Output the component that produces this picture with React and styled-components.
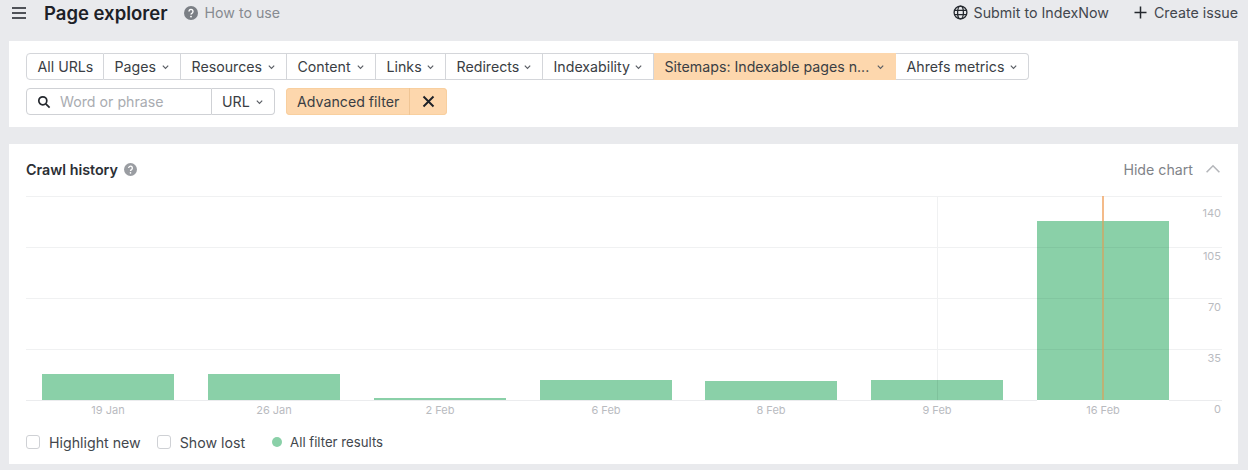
import styled, { createGlobalStyle } from "styled-components";

const GlobalStyle = createGlobalStyle`
    html, body {
        margin: 0;
        background-color: #e9eaed;
        font-family: Inter, "Liberation Sans", sans-serif;
        color: #30343a;
        overflow: hidden;
    }
`

const Page = styled.div`
    width: 1248px;
    height: 470px;
    padding: 0 10px 0 9px;
    box-sizing: border-box;
`

const TopBar = styled.div`
    height: 41px;
    display: flex;
    align-items: center;
    padding-bottom: 16px;
    padding-left: 2px;
    box-sizing: border-box;
`

const Title = styled.h1`
    margin: 0 16px 0 17px;
    font-size: 18.5px;
    line-height: 26px;
    font-weight: 600;
    color: #1d2127;
`

const HowTo = styled.span`
    display: flex;
    align-items: center;
    gap: 7px;
    font-size: 14.2px;
    color: #878b91;
`

const TopActions = styled.div`
    margin-left: auto;
    display: flex;
    align-items: center;
    gap: 24px;
`

const TopAction = styled.span`
    display: flex;
    align-items: center;
    gap: 6px;
    font-size: 14.25px;
    color: #43474d;
`

const Card = styled.section`
    background-color: white;
    box-sizing: border-box;
    height: ${(props) => props.$height}px;
    margin-bottom: 17px;
`

const FilterCard = styled(Card)`
    padding: 12px 17px;
    display: flex;
    flex-direction: column;
    gap: 8px;
`

const Row = styled.div`
    display: flex;
    align-items: stretch;
    height: 27px;
`

const Segment = styled.button`
    display: flex;
    align-items: center;
    justify-content: space-between;
    width: ${(props) => props.$width}px;
    padding: 0 10px 0 10.5px;
    box-sizing: border-box;
    font: inherit;
    font-size: 14.2px;
    white-space: nowrap;
    color: #3a3e44;
    background-color: ${(props) => (props.$active ? "#fdd7ad" : "white")};
    border: 1px solid ${(props) => (props.$active ? "#fdd7ad" : "#d4d6da")};
    border-left-width: ${(props) => (props.$first ? "1px" : "0")};
    border-radius: ${(props) => (props.$first ? "4px 0 0 4px" : props.$last ? "0 4px 4px 0" : "0")};
`

const SearchBox = styled.div`
    width: 186px;
    display: flex;
    align-items: center;
    gap: 9px;
    padding-left: 10px;
    box-sizing: border-box;
    border: 1px solid #cfd1d5;
    border-radius: 4px 0 0 4px;
    font-size: 14.2px;
    color: #a9acb1;
`

const UrlSelect = styled(Segment)`
    padding-left: 10px;
    border-color: #cfd1d5;
    border-left-width: 0;
    border-radius: 0 4px 4px 0;
`

const AdvancedFilter = styled.div`
    margin-left: 11px;
    display: flex;
    background-color: #fdd7ad;
    border-radius: 4px;
    font-size: 14.2px;
    color: #3a3e44;
    box-shadow: inset 0 0 0 1px #f8cf9f;

    span {
        display: flex;
        align-items: center;
        width: 124px;
        padding-left: 11px;
        box-sizing: border-box;
        border-right: 1px solid #f0c594;
    }

    button {
        width: 37px;
        display: flex;
        align-items: center;
        justify-content: center;
        padding: 0;
        border: none;
        background: none;
    }
`

const ChartHeader = styled.div`
    height: 50px;
    margin-bottom: 2px;
    display: flex;
    align-items: center;
    padding: 0 17px;
`

const ChartTitle = styled.h2`
    margin: 0;
    display: flex;
    align-items: center;
    gap: 6px;
    font-size: 14.3px;
    font-weight: 600;
    color: #2b2f35;
`

const HideChart = styled.span`
    margin-left: auto;
    display: flex;
    align-items: center;
    gap: 12px;
    font-size: 14.2px;
    color: #7f8389;
`

const ChartSvg = styled.svg`
    display: block;
    margin-left: 17px;

    text {
        font-family: Inter, "Liberation Sans", sans-serif;
        font-size: 11px;
        fill: #b9bbbf;
    }
`

const Legend = styled.div`
    height: 40px;
    margin-top: 3px;
    display: flex;
    align-items: center;
    padding-left: 17px;
    font-size: 14.2px;
    color: #43474d;
`

const CheckLabel = styled.label`
    display: flex;
    align-items: center;
    gap: 9px;
    margin-right: 16px;
`

const CheckBox = styled.span`
    width: 14px;
    height: 14px;
    box-sizing: border-box;
    border: 1px solid #cfd1d5;
    border-radius: 3px;
`

const SeriesLabel = styled.span`
    display: flex;
    align-items: center;
    gap: 8px;
    margin-left: 11px;
    font-size: 13.2px;

    i {
        width: 10px;
        height: 10px;
        border-radius: 50%;
        background-color: #8ad0a8;
    }
`

const filters = [
    { label: "All URLs", width: 78, plain: true, first: true },
    { label: "Pages", width: 77 },
    { label: "Resources", width: 106 },
    { label: "Content", width: 89 },
    { label: "Links", width: 70 },
    { label: "Redirects", width: 97 },
    { label: "Indexability", width: 111 },
    { label: "Sitemaps: Indexable pages n...", width: 242, active: true },
    { label: "Ahrefs metrics", width: 133, last: true },
]

const bars = [
    { x: 16, top: 178, label: "19 Jan" },
    { x: 182, top: 178, label: "26 Jan" },
    { x: 348, top: 202, label: "2 Feb" },
    { x: 514, top: 184, label: "6 Feb" },
    { x: 679, top: 185, label: "8 Feb" },
    { x: 845, top: 184, label: "9 Feb" },
    { x: 1011, top: 25, label: "16 Feb" },
]

const ticks = [
    { y: 0, label: "140", textY: 21 },
    { y: 51, label: "105", textY: 64 },
    { y: 102, label: "70", textY: 115 },
    { y: 153, label: "35", textY: 166 },
]

function Chevron({ size = 9, color = "#5a5e64", up = false }) {
    const points = up ? "1,7 5,3 9,7" : "2,4 5,7 8,4"
    return (
        <svg width={size} height={size} viewBox="0 0 10 10" fill="none" stroke={color} strokeWidth={up ? 1 : 1.3}>
            <polyline points={points} />
        </svg>
    )
}

function HelpIcon({ size = 14, color = "#7b7f85" }) {
    return (
        <svg width={size} height={size} viewBox="0 0 14 14">
            <circle cx="7" cy="7" r="7" fill={color} />
            <path d="M5 5.4a2 2 0 1 1 3.1 1.7c-.7.4-1.1.8-1.1 1.5" fill="none" stroke="white" strokeWidth="1.4" />
            <circle cx="7" cy="10.6" r=".9" fill="white" />
        </svg>
    )
}

function App() {
    return (
        <Page>
            <GlobalStyle />
            <TopBar>
                <svg width="16" height="14" viewBox="0 0 16 14" stroke="#1d2127" strokeWidth="1.7">
                    <path d="M1 2h14M1 7h14M1 12h14" />
                </svg>
                <Title>Page explorer</Title>
                <HowTo><HelpIcon />How to use</HowTo>
                <TopActions>
                    <TopAction>
                        <svg width="15" height="15" viewBox="0 0 15 15" fill="none" stroke="#24282e" strokeWidth="1.3">
                            <circle cx="7.5" cy="7.5" r="6.4" />
                            <ellipse cx="7.5" cy="7.5" rx="2.9" ry="6.4" />
                            <path d="M1.5 5.4h12M1.5 9.6h12" />
                        </svg>
                        Submit to IndexNow
                    </TopAction>
                    <TopAction>
                        <svg width="15" height="15" viewBox="0 0 15 15" stroke="#24282e" strokeWidth="1.5">
                            <path d="M7.5 1.5v12M1.5 7.5h12" />
                        </svg>
                        Create issue
                    </TopAction>
                </TopActions>
            </TopBar>

            <FilterCard $height={86}>
                <Row>
                    {filters.map((f) => (
                        <Segment key={f.label} $width={f.width} $active={f.active} $first={f.first} $last={f.last}>
                            {f.label}
                            {!f.plain && <Chevron />}
                        </Segment>
                    ))}
                </Row>
                <Row>
                    <SearchBox>
                        <svg width="14" height="14" viewBox="0 0 14 14" fill="none" stroke="#24282e" strokeWidth="1.7">
                            <circle cx="5.8" cy="5.8" r="4" />
                            <path d="M8.8 8.8l3.8 3.8" />
                        </svg>
                        Word or phrase
                    </SearchBox>
                    <UrlSelect $width={63}>URL<Chevron /></UrlSelect>
                    <AdvancedFilter>
                        <span>Advanced filter</span>
                        <button aria-label="Remove filter">
                            <svg width="13" height="13" viewBox="0 0 13 13" stroke="#1d2127" strokeWidth="1.9">
                                <path d="M1.5 1.5l10 10M11.5 1.5l-10 10" />
                            </svg>
                        </button>
                    </AdvancedFilter>
                </Row>
            </FilterCard>

            <Card $height={320}>
                <ChartHeader>
                    <ChartTitle>Crawl history <HelpIcon size={13} color="#9a9da2" /></ChartTitle>
                    <HideChart>Hide chart <Chevron size={16} color="#b4b6ba" up /></HideChart>
                </ChartHeader>
                <ChartSvg width="1196" height="223" viewBox="0 0 1196 223">
                    {ticks.map((t) => (
                        <g key={t.label}>
                            <line x1="0" x2="1196" y1={t.y + 0.5} y2={t.y + 0.5} stroke="#f0f1f2" />
                            <text x="1195" y={t.textY} textAnchor="end">{t.label}</text>
                        </g>
                    ))}
                    <line x1="911.5" x2="911.5" y1="0" y2="184" stroke="#f0f1f2" />
                    {bars.map((b) => (
                        <g key={b.label}>
                            <rect x={b.x} y={b.top} width="132" height={204 - b.top} fill="#8ad0a8" />
                            <text x={b.x + 66} y="218" textAnchor="middle">{b.label}</text>
                        </g>
                    ))}
                    <line x1="911.5" x2="911.5" y1="184" y2="204" stroke="#7fc29c" />
                    <line x1="1011" x2="1143" y1="51.5" y2="51.5" stroke="#82c6a0" />
                    <line x1="1011" x2="1143" y1="102.5" y2="102.5" stroke="#82c6a0" />
                    <line x1="1011" x2="1143" y1="153.5" y2="153.5" stroke="#82c6a0" />
                    <line x1="0" x2="1011" y1="204.5" y2="204.5" stroke="#ebecee" />
                    <line x1="1143" x2="1196" y1="204.5" y2="204.5" stroke="#ebecee" />
                    <line x1="1077" x2="1077" y1="0" y2="25" stroke="#f2aa6c" strokeWidth="1.6" />
                    <line x1="1077" x2="1077" y1="25" y2="204" stroke="#c9aa6a" strokeWidth="1.6" />
                    <text x="1195" y="217" textAnchor="end">0</text>
                </ChartSvg>
                <Legend>
                    <CheckLabel><CheckBox />Highlight new</CheckLabel>
                    <CheckLabel><CheckBox />Show lost</CheckLabel>
                    <SeriesLabel><i />All filter results</SeriesLabel>
                </Legend>
            </Card>
        </Page>
    )
}

export default App
